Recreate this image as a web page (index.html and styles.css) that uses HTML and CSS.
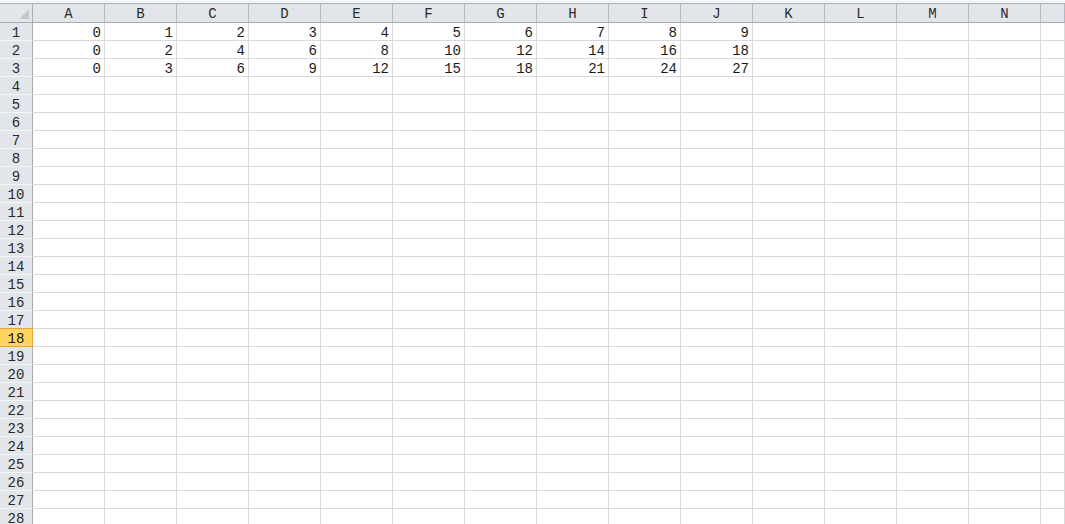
FILE: index.html
```html
<!DOCTYPE html>
<html>
<head>
<meta charset="utf-8">
<link rel="stylesheet" href="styles.css">
</head>
<body>
<div class="topbar"></div>
<div class="sheet">
  <div class="h corner"><span class="tri"></span></div>
  <div class="h">A</div><div class="h">B</div><div class="h">C</div><div class="h">D</div><div class="h">E</div><div class="h">F</div><div class="h">G</div><div class="h">H</div><div class="h">I</div><div class="h">J</div><div class="h">K</div><div class="h">L</div><div class="h">M</div><div class="h">N</div><div class="h"></div>

  <div class="rh">1</div><div class="c">0</div><div class="c">1</div><div class="c">2</div><div class="c">3</div><div class="c">4</div><div class="c">5</div><div class="c">6</div><div class="c">7</div><div class="c">8</div><div class="c">9</div><div class="c"></div><div class="c"></div><div class="c"></div><div class="c"></div><div class="c"></div>
  <div class="rh">2</div><div class="c">0</div><div class="c">2</div><div class="c">4</div><div class="c">6</div><div class="c">8</div><div class="c">10</div><div class="c">12</div><div class="c">14</div><div class="c">16</div><div class="c">18</div><div class="c"></div><div class="c"></div><div class="c"></div><div class="c"></div><div class="c"></div>
  <div class="rh">3</div><div class="c">0</div><div class="c">3</div><div class="c">6</div><div class="c">9</div><div class="c">12</div><div class="c">15</div><div class="c">18</div><div class="c">21</div><div class="c">24</div><div class="c">27</div><div class="c"></div><div class="c"></div><div class="c"></div><div class="c"></div><div class="c"></div>
  <div class="rh">4</div><div class="c"></div><div class="c"></div><div class="c"></div><div class="c"></div><div class="c"></div><div class="c"></div><div class="c"></div><div class="c"></div><div class="c"></div><div class="c"></div><div class="c"></div><div class="c"></div><div class="c"></div><div class="c"></div><div class="c"></div>
  <div class="rh">5</div><div class="c"></div><div class="c"></div><div class="c"></div><div class="c"></div><div class="c"></div><div class="c"></div><div class="c"></div><div class="c"></div><div class="c"></div><div class="c"></div><div class="c"></div><div class="c"></div><div class="c"></div><div class="c"></div><div class="c"></div>
  <div class="rh">6</div><div class="c"></div><div class="c"></div><div class="c"></div><div class="c"></div><div class="c"></div><div class="c"></div><div class="c"></div><div class="c"></div><div class="c"></div><div class="c"></div><div class="c"></div><div class="c"></div><div class="c"></div><div class="c"></div><div class="c"></div>
  <div class="rh">7</div><div class="c"></div><div class="c"></div><div class="c"></div><div class="c"></div><div class="c"></div><div class="c"></div><div class="c"></div><div class="c"></div><div class="c"></div><div class="c"></div><div class="c"></div><div class="c"></div><div class="c"></div><div class="c"></div><div class="c"></div>
  <div class="rh">8</div><div class="c"></div><div class="c"></div><div class="c"></div><div class="c"></div><div class="c"></div><div class="c"></div><div class="c"></div><div class="c"></div><div class="c"></div><div class="c"></div><div class="c"></div><div class="c"></div><div class="c"></div><div class="c"></div><div class="c"></div>
  <div class="rh">9</div><div class="c"></div><div class="c"></div><div class="c"></div><div class="c"></div><div class="c"></div><div class="c"></div><div class="c"></div><div class="c"></div><div class="c"></div><div class="c"></div><div class="c"></div><div class="c"></div><div class="c"></div><div class="c"></div><div class="c"></div>
  <div class="rh">10</div><div class="c"></div><div class="c"></div><div class="c"></div><div class="c"></div><div class="c"></div><div class="c"></div><div class="c"></div><div class="c"></div><div class="c"></div><div class="c"></div><div class="c"></div><div class="c"></div><div class="c"></div><div class="c"></div><div class="c"></div>
  <div class="rh">11</div><div class="c"></div><div class="c"></div><div class="c"></div><div class="c"></div><div class="c"></div><div class="c"></div><div class="c"></div><div class="c"></div><div class="c"></div><div class="c"></div><div class="c"></div><div class="c"></div><div class="c"></div><div class="c"></div><div class="c"></div>
  <div class="rh">12</div><div class="c"></div><div class="c"></div><div class="c"></div><div class="c"></div><div class="c"></div><div class="c"></div><div class="c"></div><div class="c"></div><div class="c"></div><div class="c"></div><div class="c"></div><div class="c"></div><div class="c"></div><div class="c"></div><div class="c"></div>
  <div class="rh">13</div><div class="c"></div><div class="c"></div><div class="c"></div><div class="c"></div><div class="c"></div><div class="c"></div><div class="c"></div><div class="c"></div><div class="c"></div><div class="c"></div><div class="c"></div><div class="c"></div><div class="c"></div><div class="c"></div><div class="c"></div>
  <div class="rh">14</div><div class="c"></div><div class="c"></div><div class="c"></div><div class="c"></div><div class="c"></div><div class="c"></div><div class="c"></div><div class="c"></div><div class="c"></div><div class="c"></div><div class="c"></div><div class="c"></div><div class="c"></div><div class="c"></div><div class="c"></div>
  <div class="rh">15</div><div class="c"></div><div class="c"></div><div class="c"></div><div class="c"></div><div class="c"></div><div class="c"></div><div class="c"></div><div class="c"></div><div class="c"></div><div class="c"></div><div class="c"></div><div class="c"></div><div class="c"></div><div class="c"></div><div class="c"></div>
  <div class="rh">16</div><div class="c"></div><div class="c"></div><div class="c"></div><div class="c"></div><div class="c"></div><div class="c"></div><div class="c"></div><div class="c"></div><div class="c"></div><div class="c"></div><div class="c"></div><div class="c"></div><div class="c"></div><div class="c"></div><div class="c"></div>
  <div class="rh pre">17</div><div class="c"></div><div class="c"></div><div class="c"></div><div class="c"></div><div class="c"></div><div class="c"></div><div class="c"></div><div class="c"></div><div class="c"></div><div class="c"></div><div class="c"></div><div class="c"></div><div class="c"></div><div class="c"></div><div class="c"></div>
  <div class="rh sel">18</div><div class="c"></div><div class="c"></div><div class="c"></div><div class="c"></div><div class="c"></div><div class="c"></div><div class="c"></div><div class="c"></div><div class="c"></div><div class="c"></div><div class="c"></div><div class="c"></div><div class="c"></div><div class="c"></div><div class="c"></div>
  <div class="rh">19</div><div class="c"></div><div class="c"></div><div class="c"></div><div class="c"></div><div class="c"></div><div class="c"></div><div class="c"></div><div class="c"></div><div class="c"></div><div class="c"></div><div class="c"></div><div class="c"></div><div class="c"></div><div class="c"></div><div class="c"></div>
  <div class="rh">20</div><div class="c"></div><div class="c"></div><div class="c"></div><div class="c"></div><div class="c"></div><div class="c"></div><div class="c"></div><div class="c"></div><div class="c"></div><div class="c"></div><div class="c"></div><div class="c"></div><div class="c"></div><div class="c"></div><div class="c"></div>
  <div class="rh">21</div><div class="c"></div><div class="c"></div><div class="c"></div><div class="c"></div><div class="c"></div><div class="c"></div><div class="c"></div><div class="c"></div><div class="c"></div><div class="c"></div><div class="c"></div><div class="c"></div><div class="c"></div><div class="c"></div><div class="c"></div>
  <div class="rh">22</div><div class="c"></div><div class="c"></div><div class="c"></div><div class="c"></div><div class="c"></div><div class="c"></div><div class="c"></div><div class="c"></div><div class="c"></div><div class="c"></div><div class="c"></div><div class="c"></div><div class="c"></div><div class="c"></div><div class="c"></div>
  <div class="rh">23</div><div class="c"></div><div class="c"></div><div class="c"></div><div class="c"></div><div class="c"></div><div class="c"></div><div class="c"></div><div class="c"></div><div class="c"></div><div class="c"></div><div class="c"></div><div class="c"></div><div class="c"></div><div class="c"></div><div class="c"></div>
  <div class="rh">24</div><div class="c"></div><div class="c"></div><div class="c"></div><div class="c"></div><div class="c"></div><div class="c"></div><div class="c"></div><div class="c"></div><div class="c"></div><div class="c"></div><div class="c"></div><div class="c"></div><div class="c"></div><div class="c"></div><div class="c"></div>
  <div class="rh">25</div><div class="c"></div><div class="c"></div><div class="c"></div><div class="c"></div><div class="c"></div><div class="c"></div><div class="c"></div><div class="c"></div><div class="c"></div><div class="c"></div><div class="c"></div><div class="c"></div><div class="c"></div><div class="c"></div><div class="c"></div>
  <div class="rh">26</div><div class="c"></div><div class="c"></div><div class="c"></div><div class="c"></div><div class="c"></div><div class="c"></div><div class="c"></div><div class="c"></div><div class="c"></div><div class="c"></div><div class="c"></div><div class="c"></div><div class="c"></div><div class="c"></div><div class="c"></div>
  <div class="rh">27</div><div class="c"></div><div class="c"></div><div class="c"></div><div class="c"></div><div class="c"></div><div class="c"></div><div class="c"></div><div class="c"></div><div class="c"></div><div class="c"></div><div class="c"></div><div class="c"></div><div class="c"></div><div class="c"></div><div class="c"></div>
  <div class="rh">28</div><div class="c"></div><div class="c"></div><div class="c"></div><div class="c"></div><div class="c"></div><div class="c"></div><div class="c"></div><div class="c"></div><div class="c"></div><div class="c"></div><div class="c"></div><div class="c"></div><div class="c"></div><div class="c"></div><div class="c"></div>
</div>
</body>
</html>
```

FILE: styles.css
```css
html, body {
  margin: 0;
  padding: 0;
  background: #ffffff;
  overflow: hidden;
}

body {
  width: 1065px;
  height: 524px;
  font-family: "Liberation Mono", "DejaVu Sans Mono", monospace;
  font-size: 14px;
  color: #1a1a1a;
}

.topbar {
  height: 3px;
  background: #f3f4f6;
  border-bottom: 1px solid #aab1ba;
}

.sheet {
  display: grid;
  grid-template-columns: 33px repeat(14, 72px) 1fr;
  grid-template-rows: 19px;
  grid-auto-rows: 18px;
}

.h {
  box-sizing: border-box;
  background: #e2e5e9;
  border-right: 1px solid #b3b9c0;
  border-bottom: 1px solid #a6adb5;
  display: flex;
  align-items: center;
  justify-content: center;
  color: #2a2a2a;
  padding-top: 2px;
}

.corner {
  position: relative;
  border-right-color: #a6adb5;
}

.tri {
  position: absolute;
  right: 3px;
  bottom: 3px;
  width: 0;
  height: 0;
  border-left: 10px solid transparent;
  border-bottom: 10px solid #c3c8ce;
}

.rh {
  box-sizing: border-box;
  background: #e2e5e9;
  border-right: 1px solid #a6adb5;
  border-bottom: 1px solid #f4f5f7;
  display: flex;
  align-items: center;
  justify-content: center;
  color: #2a2a2a;
  padding-top: 2px;
}

.rh.pre {
  border-bottom-color: #e3a43a;
}

.rh.sel {
  background: #ffd55f;
  border-right-color: #e3a43a;
  border-bottom-color: #e3a43a;
  color: #1a1a1a;
}

.c {
  box-sizing: border-box;
  border-right: 1px solid #d9d9d9;
  border-bottom: 1px solid #d9d9d9;
  display: flex;
  align-items: center;
  justify-content: flex-end;
  padding-right: 3px;
  padding-top: 2px;
}
```
